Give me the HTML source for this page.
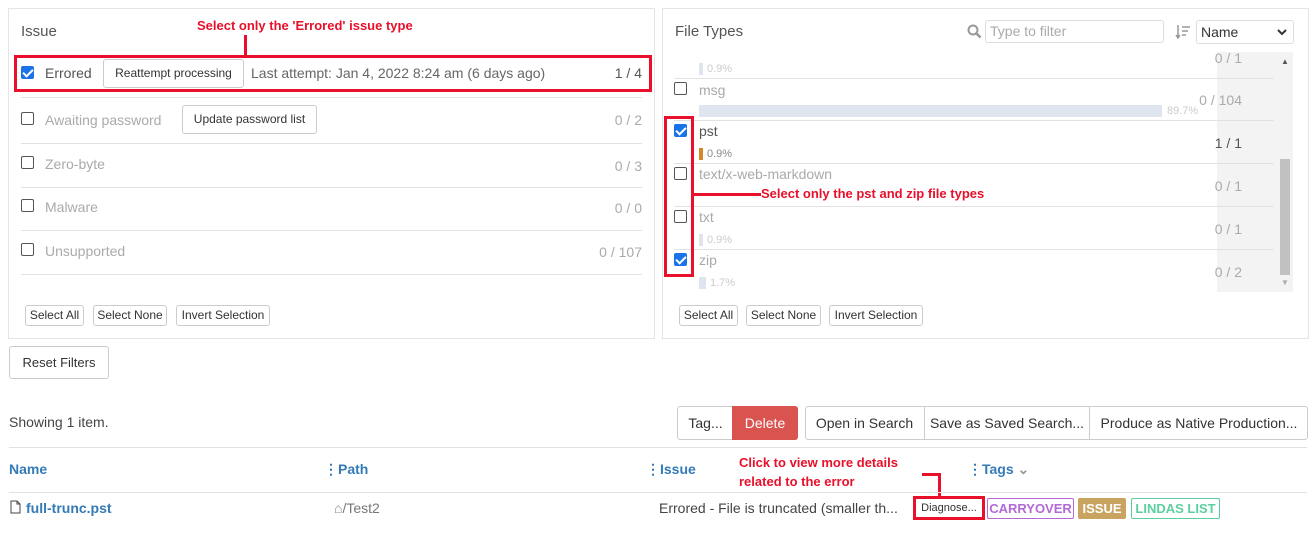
<!DOCTYPE html>
<html><head><style>
*{box-sizing:border-box;margin:0;padding:0}
body{width:1315px;height:557px;background:#fff;font-family:"Liberation Sans",sans-serif;font-size:14px;color:#333;position:relative;overflow:hidden}
.a{position:absolute;white-space:nowrap}
.panel{position:absolute;border:1px solid #e5e5e5;background:#fff}
.cb{position:absolute;width:13px;height:13px;border:1px solid #555;border-radius:2px;background:#fff}
.cb.on{background:#1a73e8;border-color:#1a73e8}
.cb.on:after{content:"";position:absolute;left:3px;top:0px;width:4px;height:8px;border:solid #fff;border-width:0 2px 2px 0;transform:rotate(45deg)}
.btn{position:absolute;border:1px solid #ccc;border-radius:3px;background:#fff;font-size:12px;color:#333;text-align:center}
.sep{position:absolute;height:1px;background:#e2e2e2}
.g{color:#aaa}
.red{color:#e8102a;font-weight:bold;font-size:13px}
.rl{position:absolute;background:#e8102a}
.bar{position:absolute;height:12px;background:#dfe5ee}
.pct{position:absolute;font-size:11px;color:#ccc}
.h{color:#337ab7;font-weight:bold}
</style></head><body>

<div class="panel" style="left:8px;top:8px;width:647px;height:331px"></div>
<div class="a" style="left:21px;top:23px;font-size:15px;color:#555">Issue</div>
<div class="a red" style="left:197px;top:18px">Select only the 'Errored' issue type</div>
<div class="rl" style="left:244px;top:35px;width:3px;height:20px"></div>
<div class="a" style="left:14px;top:55px;width:638px;height:37px;border:3px solid #e8102a"></div>
<div class="cb on" style="left:21px;top:66px"></div>
<div class="a" style="left:45px;top:65px;color:#555">Errored</div>
<div class="btn" style="left:103px;top:59px;width:141px;height:29px;line-height:27px">Reattempt processing</div>
<div class="a" style="left:251px;top:65px;color:#666">Last attempt: Jan 4, 2022 8:24 am (6 days ago)</div>
<div class="a" style="right:673px;top:65px;color:#555">1 / 4</div>
<div class="sep" style="left:21px;top:97px;width:621px"></div>
<div class="cb" style="left:21px;top:112px"></div>
<div class="a g" style="left:45px;top:112px">Awaiting password</div>
<div class="btn" style="left:182px;top:105px;width:135px;height:29px;line-height:27px">Update password list</div>
<div class="a g" style="right:673px;top:112px">0 / 2</div>
<div class="sep" style="left:21px;top:143px;width:621px"></div>
<div class="cb" style="left:21px;top:156px"></div>
<div class="a g" style="left:45px;top:156px">Zero-byte</div>
<div class="a g" style="right:673px;top:158px">0 / 3</div>
<div class="sep" style="left:21px;top:187px;width:621px"></div>
<div class="cb" style="left:21px;top:199px"></div>
<div class="a g" style="left:45px;top:199px">Malware</div>
<div class="a g" style="right:673px;top:200px">0 / 0</div>
<div class="sep" style="left:21px;top:230px;width:621px"></div>
<div class="cb" style="left:21px;top:243px"></div>
<div class="a g" style="left:45px;top:243px">Unsupported</div>
<div class="a g" style="right:673px;top:244px">0 / 107</div>
<div class="sep" style="left:21px;top:274px;width:621px"></div>
<div class="btn" style="left:25px;top:305px;width:59px;height:21px;line-height:19px">Select All</div>
<div class="btn" style="left:93px;top:305px;width:74px;height:21px;line-height:19px">Select None</div>
<div class="btn" style="left:176px;top:305px;width:94px;height:21px;line-height:19px">Invert Selection</div>

<div class="panel" style="left:662px;top:8px;width:647px;height:331px"></div>
<div class="a" style="left:675px;top:23px;font-size:15px;color:#555">File Types</div>
<svg class="a" style="left:967px;top:24px" width="15" height="15" viewBox="0 0 15 15"><circle cx="6" cy="6" r="4.5" fill="none" stroke="#999" stroke-width="2"/><path d="M9.5 9.5l4 4" stroke="#999" stroke-width="2.5"/></svg>
<div class="a" style="left:985px;top:20px;width:179px;height:23px;border:1px solid #ddd;border-radius:3px;padding:2px 4px;color:#aaa">Type to filter</div>
<svg class="a" style="left:1175px;top:24px" width="16" height="16" viewBox="0 0 16 16"><path d="M3 1v13M1 11l2 3 2-3M7 3h8M7 7h6M7 11h4" stroke="#999" stroke-width="1.5" fill="none"/></svg>
<div class="a" style="left:1196px;top:20px;width:98px;height:24px;border:1px solid #ddd;border-radius:3px;padding:3px 4px;color:#333">Name<svg style="position:absolute;right:6px;top:8px" width="10" height="7" viewBox="0 0 10 7"><path d="M1 1l4 4 4-4" stroke="#333" stroke-width="2" fill="none"/></svg></div>

<div class="a" style="left:1217px;top:52px;width:76px;height:240px;background:#f3f3f3"></div>
<div class="a" style="left:1280px;top:159px;width:10px;height:116px;background:#c1c1c1"></div>
<div class="a" style="left:1281px;top:57px;font-size:8px;color:#555">&#9650;</div>
<div class="a" style="left:1281px;top:278px;font-size:8px;color:#aaa">&#9660;</div>

<div class="a g" style="right:73px;top:50px">0 / 1</div>
<div class="bar" style="left:699px;top:63px;width:4px"></div><div class="pct" style="left:707px;top:63px">0.9%</div>
<div class="sep" style="left:674px;top:78px;width:600px"></div>
<div class="cb" style="left:674px;top:82px"></div>
<div class="a g" style="left:699px;top:82px">msg</div>
<div class="bar" style="left:699px;top:105px;width:463px"></div><div class="pct" style="left:1167px;top:105px">89.7%</div>
<div class="a g" style="right:73px;top:92px">0 / 104</div>
<div class="sep" style="left:674px;top:120px;width:600px"></div>
<div class="cb on" style="left:674px;top:124px"></div>
<div class="a" style="left:699px;top:123px;color:#555">pst</div>
<div class="bar" style="left:699px;top:148px;width:4px;background:#d4882a"></div><div class="pct" style="left:707px;top:148px;color:#888">0.9%</div>
<div class="a" style="right:73px;top:135px;color:#555">1 / 1</div>
<div class="sep" style="left:674px;top:163px;width:600px"></div>
<div class="cb" style="left:674px;top:167px"></div>
<div class="a g" style="left:699px;top:166px">text/x-web-markdown</div>
<div class="a g" style="right:73px;top:178px">0 / 1</div>
<div class="sep" style="left:674px;top:206px;width:600px"></div>
<div class="cb" style="left:674px;top:210px"></div>
<div class="a g" style="left:699px;top:209px">txt</div>
<div class="bar" style="left:699px;top:234px;width:4px"></div><div class="pct" style="left:707px;top:234px">0.9%</div>
<div class="a g" style="right:73px;top:221px">0 / 1</div>
<div class="sep" style="left:674px;top:249px;width:600px"></div>
<div class="cb on" style="left:674px;top:253px"></div>
<div class="a g" style="left:699px;top:252px">zip</div>
<div class="bar" style="left:699px;top:277px;width:7px"></div><div class="pct" style="left:710px;top:277px">1.7%</div>
<div class="a g" style="right:73px;top:264px">0 / 2</div>
<div class="a" style="left:664px;top:116px;width:30px;height:161px;border:3px solid #e8102a"></div>
<div class="rl" style="left:693px;top:193px;width:68px;height:3px"></div>
<div class="a red" style="left:761px;top:186px">Select only the pst and zip file types</div>

<div class="btn" style="left:679px;top:305px;width:59px;height:21px;line-height:19px">Select All</div>
<div class="btn" style="left:746px;top:305px;width:75px;height:21px;line-height:19px">Select None</div>
<div class="btn" style="left:829px;top:305px;width:94px;height:21px;line-height:19px">Invert Selection</div>

<div class="btn" style="left:9px;top:346px;width:100px;height:33px;line-height:31px;font-size:13px">Reset Filters</div>
<div class="a" style="left:9px;top:414px;color:#444">Showing 1 item.</div>
<div class="btn" style="left:677px;top:406px;width:57px;height:34px;line-height:32px;font-size:14px;border-radius:3px 0 0 3px">Tag...</div>
<div class="a" style="left:732px;top:406px;width:66px;height:34px;line-height:34px;background:#d9534f;color:#fff;text-align:center;border-radius:0 3px 3px 0">Delete</div>
<div class="btn" style="left:805px;top:406px;width:503px;height:34px"></div>
<div class="a" style="left:805px;top:415px;width:119px;text-align:center">Open in Search</div>
<div class="sep" style="left:924px;top:407px;width:1px;height:32px;background:#ccc"></div>
<div class="a" style="left:925px;top:415px;width:164px;text-align:center">Save as Saved Search...</div>
<div class="sep" style="left:1089px;top:407px;width:1px;height:32px;background:#ccc"></div>
<div class="a" style="left:1090px;top:415px;width:218px;text-align:center">Produce as Native Production...</div>
<div class="sep" style="left:9px;top:447px;width:1298px"></div>
<div class="a h" style="left:9px;top:461px">Name</div>
<div class="a h" style="left:324px;top:461px">&#8942;Path</div>
<div class="a h" style="left:646px;top:461px">&#8942;Issue</div>
<div class="a h" style="left:968px;top:461px">&#8942;Tags <span style="color:#999">&#8964;</span></div>
<div class="a red" style="left:739px;top:455px">Click to view more details</div>
<div class="a red" style="left:739px;top:474px">related to the error</div>
<div class="rl" style="left:922px;top:473px;width:19px;height:3px"></div>
<div class="rl" style="left:938px;top:473px;width:3px;height:24px"></div>
<div class="sep" style="left:9px;top:492px;width:1298px"></div>
<svg class="a" style="left:10px;top:500px" width="11" height="14" viewBox="0 0 11 14"><path d="M1 1h6l3 3v9H1z M7 1v3h3" fill="none" stroke="#444"/></svg>
<div class="a h" style="left:26px;top:500px">full-trunc.pst</div>
<div class="a" style="left:334px;top:500px;color:#777"><span style="color:#888">&#8962;</span>/Test2</div>
<div class="a" style="left:659px;top:500px;color:#444">Errored - File is truncated (smaller th...</div>
<div class="a" style="left:913px;top:496px;width:72px;height:24px;border:3px solid #e8102a;font-size:11px;text-align:center;line-height:18px;color:#333">Diagnose...</div>
<div class="a" style="left:987px;top:498px;width:87px;height:21px;border:1px solid #b36ad6;border-radius:2px;color:#b36ad6;font-size:13px;font-weight:bold;text-align:center;line-height:19px">CARRYOVER</div>
<div class="a" style="left:1078px;top:498px;width:48px;height:21px;background:#c9a460;border-radius:2px;color:#fff;font-size:13px;font-weight:bold;text-align:center;line-height:21px">ISSUE</div>
<div class="a" style="left:1131px;top:498px;width:89px;height:21px;border:1px solid #5ccfa0;border-radius:2px;color:#5ccfa0;font-size:13px;font-weight:bold;text-align:center;line-height:19px">LINDAS LIST</div>
</body></html>
